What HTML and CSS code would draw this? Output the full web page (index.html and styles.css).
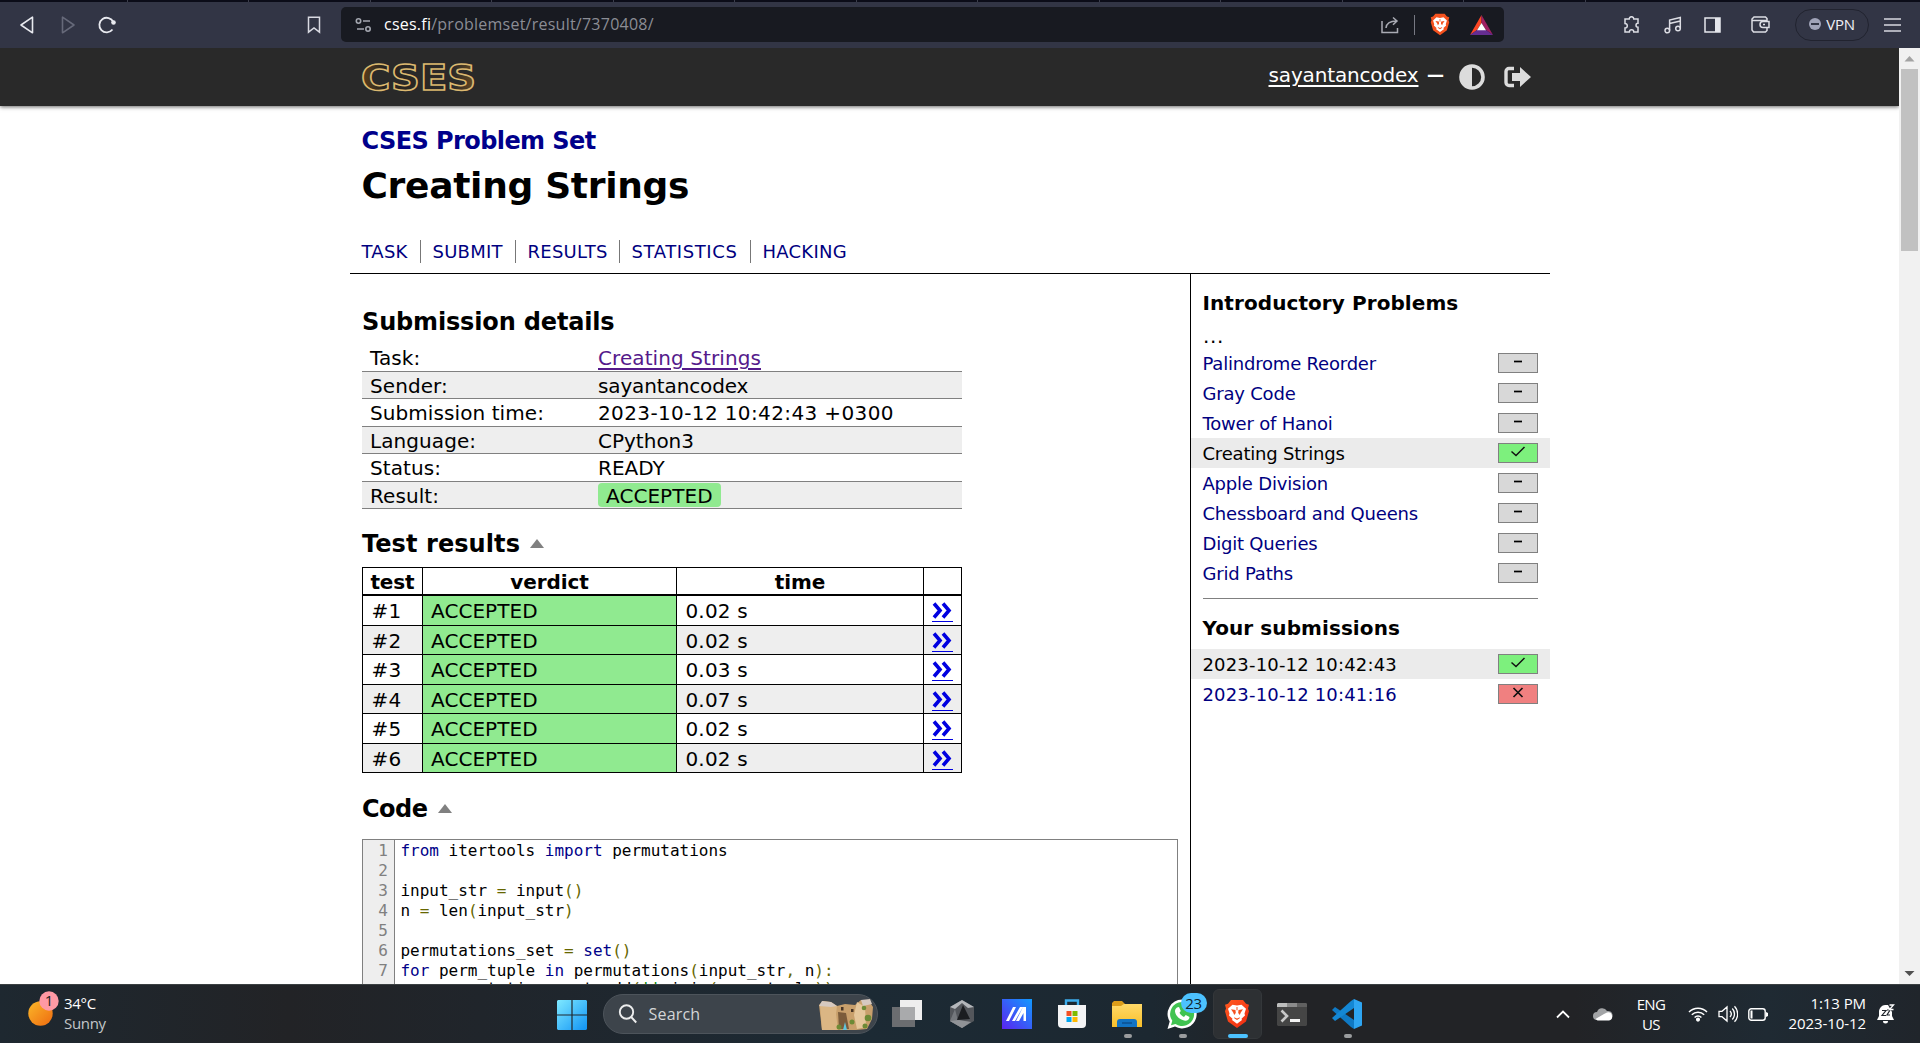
FILE: index.html
```
<!DOCTYPE html>
<html lang="en">
<head>
<meta charset="utf-8">
<title>CSES - Creating Strings</title>
<link rel="stylesheet" href="styles.css">
</head>
<body>
<svg class="defs" width="0" height="0">
  <defs>
    <linearGradient id="gold" x1="0" y1="0" x2="1" y2="0"><stop offset="0" stop-color="#5b401c"/><stop offset=".2" stop-color="#29241e"/><stop offset=".8" stop-color="#2b2a29"/><stop offset="1" stop-color="#6a4a1d"/></linearGradient>
    <linearGradient id="win" x1="0" y1="0" x2="1" y2="1"><stop offset="0" stop-color="#7fe9ff"/><stop offset="1" stop-color="#1093f5"/></linearGradient>
    <linearGradient id="sun" x1="0" y1="0" x2="1" y2="1"><stop offset="0" stop-color="#fbb829"/><stop offset="1" stop-color="#ee6a10"/></linearGradient>
    <linearGradient id="asus" x1="0" y1="1" x2="1" y2="0"><stop offset="0" stop-color="#5b23f0"/><stop offset="1" stop-color="#119bff"/></linearGradient>
    <linearGradient id="folder" x1="0" y1="0" x2="0" y2="1"><stop offset="0" stop-color="#ffd968"/><stop offset="1" stop-color="#f8bf2a"/></linearGradient>
    <linearGradient id="flame" x1="0" y1="0" x2="1" y2="1"><stop offset="0" stop-color="#ff5a1f"/><stop offset="1" stop-color="#f02a12"/></linearGradient>
    <symbol id="tri-up" viewBox="0 0 14 9"><path d="M7 0 14 9H0z" fill="#808080"/></symbol>
    <symbol id="more" viewBox="0 0 20 18"><path d="M2 2.500l6 7-6 7M11 2.500l6 7-6 7" fill="none" stroke="#0000e0" stroke-width="3.600"/></symbol>
    <symbol id="dash" viewBox="0 0 38 18"><path d="M15 7.5h8" stroke="#000" stroke-width="1.7"/></symbol>
    <symbol id="tick" viewBox="0 0 38 18"><path d="M12.5 7.500l4.500 4 8.500-8.500" fill="none" stroke="#111" stroke-width="1.5"/></symbol>
    <symbol id="cross" viewBox="0 0 38 18"><path d="M14.500 3l9 9M23.500 3l-9 9" fill="none" stroke="#111" stroke-width="1.700"/></symbol>
    <symbol id="lion" viewBox="0 0 26 32">
      <path d="M7 1h12l3 4 3 1-1 4 1 3-3 11-9 7-9-7L1 13l1-3-1-4 3-1z"/>
      <path fill="#fff" d="M8.500 6l4.500 1 4.500-1 4.500 4.500-1.500 5 .5 2-3.500 3.500.5 1.500-5 4-5-4 .5-1.500L5 17.500l.5-2-1.500-5z"/>
      <path fill="#f4511e" d="M7 11l4.500.8.3 3-1.600 2.200-1-2.700zM19 11l-4.500.8-.3 3 1.600 2.200 1-2.700zM12.500 8.500h1v3.500h-1zM10 19.500l3 1.400 3-1.400-.5 1.300-2.500 1.700-2.500-1.700z"/>
    </symbol>
  </defs>
</svg>

<div class="browser">
  <div class="tabstrip"><i></i><i></i><i></i><i></i><i></i><i></i><i></i><i></i><i></i><i></i><i></i><i></i><i></i></div>
  <div class="toolbar">
    <svg class="nav-back" width="16" height="20" viewBox="0 0 16 20"><path d="M13.500 2.200v15.600L2 10z" fill="none" stroke="#e8e9ef" stroke-width="1.600" stroke-linejoin="round"/></svg>
    <svg class="nav-fwd" width="16" height="20" viewBox="0 0 16 20"><path d="M2.500 2.200v15.600L14 10z" fill="none" stroke="#666979" stroke-width="1.600" stroke-linejoin="round"/></svg>
    <svg class="nav-reload" width="20" height="20" viewBox="0 0 20 20"><path d="M15.500 14.500A7.300 7.300 0 1 1 16.300 7" fill="none" stroke="#e8e9ef" stroke-width="1.800"/><circle cx="16.500" cy="7.500" r="2.300" fill="#e8e9ef"/></svg>
    <svg class="nav-mark" width="14" height="18" viewBox="0 0 14 18"><path d="M1.500 1.200h11v15L7 12l-5.500 4.200z" fill="none" stroke="#d9dae2" stroke-width="1.500"/></svg>
    <div class="omnibox">
      <svg width="17" height="14" viewBox="0 0 17 14" fill="none" stroke="#a4a7b0" stroke-width="1.600"><circle cx="3.500" cy="3" r="2.200"/><path d="M8 3h7M2 11h7"/><circle cx="13" cy="11" r="2.200"/></svg>
      <span class="url"><b>cses.fi</b>/problemset/result/7370408/</span>
      <svg class="share" width="18" height="18" viewBox="0 0 18 18" fill="none" stroke="#a9abb4" stroke-width="1.500"><path d="M1 5v11.500h15.500V12M5 12c.5-5 4-7 10.500-7M12 1.500L16 5l-4 3.800"/></svg>
      <span class="bar"></span>
      <svg class="shield" width="20" height="23" viewBox="0 0 26 32" preserveAspectRatio="none" fill="#f4511e"><use href="#lion" width="26" height="32"/></svg>
      <svg width="23" height="20" viewBox="0 0 23 20"><path d="M11.500 0v8L7 15 0 20z" fill="#ff4724"/><path d="M11.500 0v8l4.500 7 7 5z" fill="#9e1f63"/><path d="M0 20l7-5h9l7 5z" fill="#662d91"/><path d="M11.500 8l4.500 7.300H7z" fill="#fff"/></svg>
    </div>
    <div class="tools">
      <svg class="t-ext" width="18" height="18" viewBox="0 0 18 18" fill="none" stroke="#dcdde4" stroke-width="1.500"><path d="M2 3h4.200a2.300 2.300 0 0 1 4.600 0H15v4.200a2 2 0 0 0 0 4V16h-4.200a2.200 2.200 0 0 0-4.400 0H2v-4a2.300 2.300 0 0 0 0-4.600z"/></svg>
      <svg class="t-music" width="18" height="18" viewBox="0 0 18 18" fill="none" stroke="#dcdde4" stroke-width="1.500"><circle cx="3.300" cy="14.500" r="2.300"/><circle cx="14" cy="12.500" r="2.300"/><path d="M5.600 14.500V4L16.300 1.500v11M5.600 7.500L16.300 5"/></svg>
      <svg class="t-side" width="17" height="16" viewBox="0 0 17 16"><path d="M1 1h15v14H1z" fill="none" stroke="#e6e7ed" stroke-width="1.500"/><path d="M11 1h5v14h-5z" fill="#e6e7ed"/></svg>
      <svg class="t-wallet" width="19" height="17" viewBox="0 0 19 17" fill="none" stroke="#dcdde4" stroke-width="1.500"><path d="M16 5V2.500L14.500 1H3L1 3v11l1.500 2h12L16 14.500V12M1.500 4.500H15.500M18 5.500h-6a3 3 0 0 0 0 6h6z"/><path d="M12 8.500h2"/></svg>
      <span class="vpn"><i></i>VPN</span>
      <svg class="t-menu" width="17" height="14" viewBox="0 0 17 14" stroke="#d7d8e0" stroke-width="1.500"><path d="M0 1h17M0 7h17M0 13h17"/></svg>
    </div>
  </div>
</div>

<div class="viewport">
  <div class="page">
    <header class="site">
      <svg class="logo" width="120" height="36" viewBox="0 0 120 36"><text x="1" y="30" textLength="115" lengthAdjust="spacingAndGlyphs">CSES</text></svg>
      <div class="account">
        <a class="user">sayantancodex</a><span class="sep">—</span>
        <svg class="contrast" width="26" height="26" viewBox="0 0 26 26"><circle cx="13" cy="13" r="11" fill="none" stroke="#dcdcdc" stroke-width="3.600"/><path d="M13 2a11 11 0 0 0 0 22z" fill="#dcdcdc"/></svg>
        <svg class="logout" width="27" height="22" viewBox="0 0 27 22"><path d="M10 2.500H5A3 3 0 0 0 2 5.500v11a3 3 0 0 0 3 3h5" fill="none" stroke="#dcdcdc" stroke-width="3.400"/><path d="M8 7h8V1l11 10-11 10v-6H8z" fill="#dcdcdc"/></svg>
      </div>
    </header>

    <div class="title">
      <a class="set">CSES Problem Set</a>
      <h1>Creating Strings</h1>
      <nav><a class="n1">TASK</a><a class="n2">SUBMIT</a><a class="n3">RESULTS</a><a class="n4">STATISTICS</a><a class="n5">HACKING</a></nav>
    </div>

    <div class="columns">
      <main>
        <h2>Submission details</h2>
        <dl class="details">
          <div><dt>Task:</dt><dd><a class="visited">Creating Strings</a></dd></div>
          <div><dt>Sender:</dt><dd class="name">sayantancodex</dd></div>
          <div><dt>Submission time:</dt><dd class="num">2023-10-12 10:42:43 +0300</dd></div>
          <div><dt>Language:</dt><dd>CPython3</dd></div>
          <div><dt>Status:</dt><dd>READY</dd></div>
          <div><dt>Result:</dt><dd><span class="verdict">ACCEPTED</span></dd></div>
        </dl>

        <h2 class="fold tests-title">Test results <svg width="14" height="9"><use href="#tri-up"/></svg></h2>
        <div class="tests">
          <div class="head"><b>test</b><b>verdict</b><b>time</b><b></b></div>
          <div class="row"><span>#1</span><span>ACCEPTED</span><span>0.02 s</span><a><svg width="20" height="18"><use href="#more"/></svg></a></div>
          <div class="row"><span>#2</span><span>ACCEPTED</span><span>0.02 s</span><a><svg width="20" height="18"><use href="#more"/></svg></a></div>
          <div class="row"><span>#3</span><span>ACCEPTED</span><span>0.03 s</span><a><svg width="20" height="18"><use href="#more"/></svg></a></div>
          <div class="row"><span>#4</span><span>ACCEPTED</span><span>0.07 s</span><a><svg width="20" height="18"><use href="#more"/></svg></a></div>
          <div class="row"><span>#5</span><span>ACCEPTED</span><span>0.02 s</span><a><svg width="20" height="18"><use href="#more"/></svg></a></div>
          <div class="row"><span>#6</span><span>ACCEPTED</span><span>0.02 s</span><a><svg width="20" height="18"><use href="#more"/></svg></a></div>
        </div>

        <h2 class="fold code-title">Code <svg width="14" height="9"><use href="#tri-up"/></svg></h2>
        <div class="code">
<pre class="lines">1
2
3
4
5
6
7</pre>
<pre class="source"><i>from</i> itertools <i>import</i> permutations

input_str <u>=</u> input<u>()</u>
n <u>=</u> len<u>(</u>input_str<u>)</u>

permutations_set <u>=</u> <i>set</i><u>()</u>
<i>for</i> perm_tuple <i>in</i> permutations<u>(</u>input_str<u>,</u> n<u>):</u>
<span class="body">    permutations_set<u>.</u>add<u>(</u><s>''</s><u>.</u>join<u>(</u>perm_tuple<u>))</u></span></pre>
        </div>
      </main>

      <aside>
        <h4>Introductory Problems</h4>
        <div class="dots">...</div>
        <ul>
          <li><a>Palindrome Reorder</a><svg class="score"><use href="#dash"/></svg></li>
          <li><a>Gray Code</a><svg class="score"><use href="#dash"/></svg></li>
          <li><a>Tower of Hanoi</a><svg class="score"><use href="#dash"/></svg></li>
          <li class="current"><a>Creating Strings</a><svg class="score full"><use href="#tick"/></svg></li>
          <li><a>Apple Division</a><svg class="score"><use href="#dash"/></svg></li>
          <li><a>Chessboard and Queens</a><svg class="score"><use href="#dash"/></svg></li>
          <li><a>Digit Queries</a><svg class="score"><use href="#dash"/></svg></li>
          <li><a>Grid Paths</a><svg class="score"><use href="#dash"/></svg></li>
        </ul>
        <hr>
        <h4>Your submissions</h4>
        <ul class="subs">
          <li class="current"><a>2023-10-12 10:42:43</a><svg class="score full"><use href="#tick"/></svg></li>
          <li><a>2023-10-12 10:41:16</a><svg class="score zero"><use href="#cross"/></svg></li>
        </ul>
      </aside>
    </div>
  </div>
  <div class="scrollbar">
    <svg width="21" height="21" viewBox="0 0 21 21"><path d="M10.500 8l5 5.500h-10z" fill="#a3a3a3"/></svg>
    <div class="thumb"></div>
    <svg width="21" height="21" viewBox="0 0 21 21"><path d="M10.500 13l5-5h-10z" fill="#505050"/></svg>
  </div>
</div>

<footer class="taskbar">
  <div class="weather">
    <svg width="32" height="36" viewBox="0 0 32 36"><circle cx="12.500" cy="22.500" r="12.200" fill="url(#sun)"/><circle cx="21" cy="10" r="9.700" fill="#ff99a4"/><text x="21" y="15" text-anchor="middle">1</text></svg>
    <div><p class="deg">34°C</p><p class="sky">Sunny</p></div>
  </div>
  <svg class="start" width="30" height="30" viewBox="0 0 30 30" fill="url(#win)"><path d="M1 0h13.400v14.400H0V1zM15.600 0H29l1 1v13.400H15.600zM0 15.600h14.400V30H1l-1-1zM15.600 15.600H30V29l-1 1H15.600z"/></svg>
  <div class="search">
    <svg width="20" height="20" viewBox="0 0 20 20" fill="none" stroke="#eceded" stroke-width="1.900"><circle cx="8.500" cy="8" r="6.700"/><path d="M13.200 13l5 5.500"/></svg>
    <span>Search</span>
    <svg class="art" width="55" height="31" viewBox="0 0 55 31"><path d="M0 6l4-4 8 1 6 4 8-2 10 1 6-5 8 1 4 6-1 12-5 10-11 1H3z" fill="#c9a06c"/><path d="M1 6l17 1-1 8 2 16H3z" fill="#dbb684"/><path d="M38 3l8 5 1 20-9 2-3-14z" fill="#e5c79b"/><path d="M19 13l8 1 3 16H20z" fill="#7c5c3b"/><path d="M0 7l3-5 9 1 6 4-6 1z" fill="#d6c9c0"/><path d="M42 1l9-1 2 5-9 2z" fill="#d6c9c0"/><path d="M26 23l2 8h-4z" fill="#62c6dd"/><g fill="#6d8a35"><circle cx="45" cy="9" r="2.300"/><circle cx="49" cy="19" r="3.300"/><circle cx="33" cy="23" r="2.500"/><circle cx="20" cy="28" r="2.500"/><circle cx="46" cy="27" r="2.500"/></g><path d="M22 8h2.500v3.500H22zM32 10h2.500v3H32z" fill="#493525"/></svg>
  </div>
  <div class="apps">
    <div class="app"><svg width="30" height="30" viewBox="0 0 30 30"><path d="M8 1h22v20H8z" fill="#eee"/><path d="M0 8h23v20H0z" fill="#6b6d70"/><path d="M8 8h15v13H8z" fill="#a9aaac"/></svg></div>
    <div class="app"><svg width="28" height="30" viewBox="0 0 28 30"><path d="M14 1l12 7v14l-12 7-12-7V8z" fill="#53565b"/><path d="M14 1l12 7-6 1-6-5-7 6-5-2z" fill="#b4b7bb"/><path d="M2 22l5-12 3 12 13 1-9 6z" fill="#74777c"/><path d="M15 6l7 14-13 1z" fill="#1b1d20"/><path d="M2 22l9-1 12 2-9 6z" fill="#909397"/></svg></div>
    <div class="app"><svg width="30" height="30" viewBox="0 0 30 30"><path d="M0 0h30v30H0z" fill="url(#asus)"/><path d="M4 22L11 8h3L7 22zM10 22l8-14h3l-8 14zM21 8h3v14h-2.500V14L17 22h-3z" fill="#fff"/></svg></div>
    <div class="app"><svg width="30" height="30" viewBox="0 0 30 30"><path d="M9 7V1.500h12V7" fill="none" stroke="#3daceb" stroke-width="2.400"/><path d="M1 6h28v19a4 4 0 0 1-4 4H5a4 4 0 0 1-4-4z" fill="#f3f4f5"/><path d="M9.500 12H14.500v5H9.500z" fill="#f25022"/><path d="M15.500 12h5v5h-5z" fill="#7fba00"/><path d="M9.500 18h5v5h-5z" fill="#00a4ef"/><path d="M15.500 18h5v5h-5z" fill="#ffb900"/></svg></div>
    <div class="app run"><svg width="30" height="30" viewBox="0 0 30 30"><path d="M0 4l2-2h8l3 3v5H0z" fill="#dc9d1a"/><path d="M0 7h9l3-2h18v23H0z" fill="url(#folder)"/><path d="M5 28v-5a3 3 0 0 1 3-3h14a3 3 0 0 1 3 3v5z" fill="#1273c4"/><path d="M10 24h10" stroke="#0b4f91" stroke-width="1.500"/></svg></div>
    <div class="app run"><svg width="30" height="30" viewBox="0 0 30 30"><path d="M15 .5a14.500 14.500 0 1 1-7 27.100L.5 30l2.200-7.600A14.500 14.500 0 0 1 15 .5z" fill="#fff"/><path d="M15 3a12 12 0 1 1-6.500 22L4 26.300l1.300-4.500A12 12 0 0 1 15 3z" fill="#40c351"/><path d="M10 8.500l2-.5 1.800 4-1.300 1.800c1.200 2.200 2.500 3.300 4.500 4.200l1.700-1.900 3.800 1.900c0 2.500-2.300 4-4.500 3.700C12.500 21 8.500 16.500 8 12.500c-.1-1.800.8-3.300 2-4z" fill="#fff"/></svg><span class="count">23</span></div>
    <div class="app run active"><svg width="26" height="30" viewBox="0 0 26 32" preserveAspectRatio="none" fill="url(#flame)"><use href="#lion" width="26" height="32"/></svg></div>
    <div class="app"><svg width="30" height="23" viewBox="0 0 30 23"><path d="M1 0h28l1 1v21l-1 1H1l-1-1V1z" fill="#454545"/><path d="M1 0h9v4H0V1z" fill="#bdbdbd"/><path d="M10 0h10v4H10z" fill="#8b8b8b"/><path d="M20 0h9l1 1v3H20z" fill="#606060"/><path d="M4.500 7.500l5.500 5.500-5.500 5.500" fill="none" stroke="#c9c9c9" stroke-width="2.600"/><path d="M13 17.500h10" stroke="#f4f4f4" stroke-width="3"/></svg></div>
    <div class="app run"><svg width="30" height="30" viewBox="0 0 30 30"><path d="M3 8L0 11l19 17 3 2V21z" fill="#0f79c4"/><path d="M3 22l-3-3L19 2l3-2v9z" fill="#1487d4"/><path d="M22 0l8 3.500v23L22 30z" fill="#2ea5f2"/></svg></div>
  </div>
  <div class="tray">
    <svg class="chev" width="14" height="9" viewBox="0 0 14 9"><path d="M1 7.500l6-6 6 6" fill="none" stroke="#fff" stroke-width="1.800"/></svg>
    <svg class="cloud" width="20" height="14" viewBox="0 0 20 14"><path d="M4 13a4 4 0 0 1 0-8 5.500 5.500 0 0 1 10-1 4.600 4.600 0 0 1 2 9z" fill="#a2a4a6"/><path d="M2.500 12L11 7l3-1.500a4 4 0 0 1 2 7.900H4.500z" fill="#fff"/></svg>
    <div class="lang"><p>ENG</p><p>US</p></div>
    <svg class="wifi" width="20" height="16" viewBox="0 0 20 16" fill="none" stroke="#fff" stroke-width="1.500"><path d="M1 6a12.500 12.500 0 0 1 18 0M3.800 8.800a8.700 8.700 0 0 1 12.400 0M6.600 11.500a4.800 4.800 0 0 1 6.800 0"/><circle cx="10" cy="13.600" r="1.300" fill="#fff"/></svg>
    <svg class="vol" width="20" height="18" viewBox="0 0 20 18" fill="none" stroke="#fff" stroke-width="1.300"><path d="M1 6.300h3L9 2v14l-5-4.300H1zM12 6a4.500 4.500 0 0 1 0 6M14.300 3.500a8 8 0 0 1 0 11M16.500 1.300a11 11 0 0 1 0 15.400"/></svg>
    <svg class="batt" width="20" height="13" viewBox="0 0 20 13"><rect x=".8" y=".8" width="16.400" height="11.400" rx="2.500" fill="none" stroke="#fff" stroke-width="1.400"/><path d="M2.500 2.500h2v8h-2zM18 4l2 1v3l-2 1z" fill="#fff"/></svg>
    <div class="clock"><p>1:13 PM</p><p>2023-10-12</p></div>
    <svg class="bell" width="18" height="20" viewBox="0 0 18 20"><path d="M0 16l2-4V7a6.500 6.500 0 0 1 6-6h3l4 7v4l2 4zM6 17h5a2.500 2.500 0 0 1-5 0z" fill="#fff"/><path d="M5 6.500h4l-4 5h4M10 6h3l-3 5h3" fill="none" stroke="#20262c" stroke-width="1.200"/><path d="M12.500 1h4l-4 4.500h4" fill="none" stroke="#fff" stroke-width="1.300"/></svg>
  </div>
</footer>
</body>
</html>
```
FILE: styles.css
```
* { box-sizing: border-box; }
body { margin: 0; width: 1920px; height: 1043px; overflow: hidden; display: flex; flex-direction: column; background: #fff; color: #000; font-family: "DejaVu Sans", sans-serif; }
h1, h2, h4, p, ul, dl, dd, pre { margin: 0; padding: 0; }
svg { display: block; flex: none; }
.defs { height: 0; }

/* browser chrome */
.browser { flex: none; height: 48px; background: #323545; font-family: "Open Sans", sans-serif; }
.tabstrip { height: 2px; background: #0b0c18; display: flex; padding-left: 6px; }
.tabstrip i { width: 121.500px; border-right: 1px solid #3c3e4c; flex: none; }
.toolbar { display: flex; align-items: center; height: 45px; }
.nav-back { margin-left: 19px; }
.nav-fwd { margin-left: 25px; }
.nav-reload { margin-left: 21px; }
.nav-mark { margin-left: 190px; }
.omnibox { margin-left: 20px; width: 1163px; height: 35px; border-radius: 5px; background: #181a21; display: flex; align-items: center; padding: 0 11px 0 14px; }
.url { margin-left: 12px; font-size: 16px; letter-spacing: .24px; color: #8b8d95; white-space: nowrap; padding-bottom: 1px; }
.url b { font-weight: 400; color: #fff; }
.share { margin-left: auto; }
.bar { width: 1px; height: 20px; background: #777983; margin: 0 15px 0 15px; }
.shield { margin-right: 20px; }
.tools { display: flex; align-items: center; padding-left: 119px; color: #f0f0f5; }
.t-music { margin-left: 23px; }
.t-side { margin-left: 22px; }
.t-wallet { margin-left: 30px; }
.vpn { display: flex; align-items: center; justify-content: center; gap: 5px; margin: 0 15px 0 25px; width: 74px; height: 32px; border: 1px solid #21232f; border-radius: 16px; font-size: 15px; letter-spacing: -.3px; padding-bottom: 1px; }
.vpn i { width: 12px; height: 12px; border-radius: 50%; background: linear-gradient(#323545, #323545) center / 8px 2px no-repeat #a0a3b8; }

/* page */
.viewport { flex: none; height: 936px; display: flex; overflow: hidden; }
.page { width: 1899px; }
.site { height: 58px; background: #292929; box-shadow: 0 1px 4px rgba(0,0,0,.6); display: flex; padding-left: 360px; }
.logo { margin-top: 12px; }
.logo text { font: bold 35px "DejaVu Sans", sans-serif; fill: url(#gold); stroke: #dcb970; stroke-width: 1.500px; }
.account { display: flex; margin-left: 788.500px; color: #fff; font-size: 20px; line-height: 24px; padding-top: 15px; }
.user { text-decoration: underline; text-underline-offset: 3px; letter-spacing: -.15px; }
.sep { font-size: 17px; font-weight: bold; margin-left: 8.500px; }
.contrast { margin: 1px 0 0 15px; }
.logout { margin: 3px 0 0 19px; }
.title { width: 1200px; margin-left: 350px; height: 168px; padding: 20px 12px 0 11.500px; border-bottom: 1px solid #000; }
.set { display: block; font-size: 24px; line-height: 30px; font-weight: bold; color: #00008b; letter-spacing: -.58px; }
h1 { margin-top: 7px; font-size: 36px; line-height: 45px; letter-spacing: -.3px; }
nav { display: flex; margin-top: 32px; font-size: 18px; line-height: 23px; color: #000080; }
nav a { border-right: 1px solid #777; height: 23px; letter-spacing: .25px; }
nav a + a { padding-left: 12px; }
.n1 { width: 59px; }
.n2 { width: 95px; }
.n3 { width: 104px; }
.n4 { width: 131px; letter-spacing: .6px; }
.n5 { border-right: 0; }

.columns { display: flex; width: 1200px; margin-left: 350px; height: 800px; }
main { width: 840px; padding: 33px 12px 0; }
h2 { font-size: 24px; line-height: 30px; letter-spacing: -.16px; }
.details { width: 600px; margin-top: 7px; font-size: 20px; line-height: 28px; }
.details div { display: flex; height: 27.500px; border-bottom: 1px solid #808080; padding-left: 8px; }
.details div:nth-child(even) { background: #eee; }
.details dt { width: 228px; letter-spacing: .08px; }
.num { letter-spacing: .38px; }
.name { letter-spacing: -.13px; }
.visited { color: #551a8b; text-decoration: underline; text-underline-offset: 3px; letter-spacing: .09px; }
.verdict { display: block; margin-top: 1px; height: 24px; line-height: 26px; padding: 0 8px; background: #90ea90; border-radius: 4px; letter-spacing: .05px; }
.fold { display: flex; align-items: center; gap: 10px; }
.fold svg { margin-bottom: 1px; }
.tests-title { margin-top: 20px; letter-spacing: .08px; }
.code-title { margin-top: 21px; letter-spacing: -.5px; }
.tests { width: 600px; margin-top: 8px; border: 1px solid #000; border-bottom: 0; font-size: 20px; }
.head, .row { display: grid; grid-template: 100% / 60px 254px 247px 37px; }
.head { height: 28px; border-bottom: 2px solid #000; line-height: 28px; text-align: center; letter-spacing: -.1px; }
.row { height: 30px; border-bottom: 1px solid #000; line-height: 31px; }
.row:nth-child(odd) { height: 29px; background: #eee; line-height: 30px; }
.head b, .row span { border-right: 1px solid #000; }
.head b:last-child { border: 0; }
.row span { padding-left: 8.500px; letter-spacing: .15px; }
.row span:nth-child(2) { background: #90ea90; padding-left: 8px; letter-spacing: .05px; }
.row a { margin: 5px 0 0 8px; width: 21px; height: 21px; border-bottom: 1px solid #0000e0; }
.code { display: flex; width: 816px; margin-top: 15px; border: 1px solid #808080; font-size: 16px; line-height: 20px; height: 260px; }
.code pre { font-family: "DejaVu Sans Mono", monospace; padding-top: 1px; }
.code .lines { width: 32px; background: #eee; border-right: 1px solid #808080; color: #808080; text-align: right; padding-right: 6px; }
.code .source { padding-left: 5.500px; letter-spacing: -.01px; }
.source i { font-style: normal; color: #000088; }
.source u { text-decoration: none; color: #666600; }
.source s { text-decoration: none; color: #008800; }
.body { display: block; margin-top: -2px; }

aside { width: 360px; border-left: 1px solid #000; padding-top: 16px; }
h4 { padding-left: 11.500px; font-size: 20px; line-height: 26px; letter-spacing: .08px; }
.dots { padding-left: 12px; margin-top: 8px; height: 24px; line-height: 25px; font-size: 20px; letter-spacing: .6px; }
ul { list-style: none; }
li { display: flex; justify-content: space-between; height: 30px; padding: 5px 12px 0 11.500px; font-size: 18px; line-height: 22px; color: #000080; letter-spacing: -.2px; }
.current { background: #ebebeb; color: #000; }
.score { width: 40px; height: 20px; border: 1px solid #808080; background: #d8d8d8; }
.full { background: #7df07d; }
.zero { background: #f08080; }
hr { margin: 10px 12px 16px; border: 0; height: 1px; background: #808080; }
.subs { margin-top: 8px; }
.subs li { letter-spacing: .17px; }

.scrollbar { width: 21px; background: #f1f1f1; display: flex; flex-direction: column; }
.thumb { margin: 0 2px auto; height: 182px; background: #c1c1c1; }

/* taskbar */
.taskbar { flex: none; height: 59px; display: flex; background: linear-gradient(90deg, #1e2830 0, #222326 15%, #20252b 25%, #1c2a34 45%, #1c2831 60%, #222326 66%, #222326 82%, #1f2a33 92%, #20252b 100%); border-top: 1px solid #3b4042; color: #fff; font: 15px "Open Sans", sans-serif; }
.weather { display: flex; width: 556.500px; padding: 6px 0 0 27.500px; }
.weather text { font: 15px "Open Sans", sans-serif; fill: #222; }
.weather div { padding: 2px 0 0 4.500px; line-height: 20px; letter-spacing: -.3px; }
.sky { color: #c3c6c9; }
.start { margin-top: 15px; }
.search { margin: 9px 0 0 16px; width: 275px; height: 40px; border-radius: 20px; background: #3d444b; border: 1px solid #4d545b; display: flex; align-items: center; padding-left: 14px; font-size: 16px; color: #d3d5d7; letter-spacing: .2px; }
.search span { margin-left: 11px; }
.art { margin-left: auto; margin-right: 3px; }
.apps { display: flex; margin-left: 2px; }
.app { width: 49px; height: 50px; margin: 4px 3px 0; display: flex; align-items: center; justify-content: center; position: relative; border-radius: 6px; }
.run::after { content: ""; position: absolute; left: 21px; bottom: 1px; width: 8px; height: 4px; border-radius: 2px; background: #9a9c9e; }
.active { background: #2d3033; border: 1px solid #34373a; }
.active::after { left: 14px; bottom: 0; width: 20px; background: #4cc2ff; }
.count { position: absolute; left: 23px; top: 4px; width: 26px; height: 20px; border-radius: 10px; background: #4cc2ff; color: #10242e; font-size: 15px; line-height: 20px; text-align: center; letter-spacing: -.4px; }
.tray { display: flex; margin-left: auto; width: 366px; padding-left: 2px; }
.chev { margin-top: 25px; }
.cloud { margin: 22px 0 0 23px; }
.lang, .clock { line-height: 20px; padding-top: 9px; letter-spacing: -.6px; }
.lang { margin-left: 20px; width: 36px; text-align: center; }
.wifi { margin: 21px 0 0 19px; }
.vol { margin: 20px 0 0 10px; }
.batt { margin: 23px 0 0 10px; }
.clock { width: 98px; text-align: right; letter-spacing: -.08px; padding-top: 8px; }
.bell { margin: 19px 0 0 11px; }
```
